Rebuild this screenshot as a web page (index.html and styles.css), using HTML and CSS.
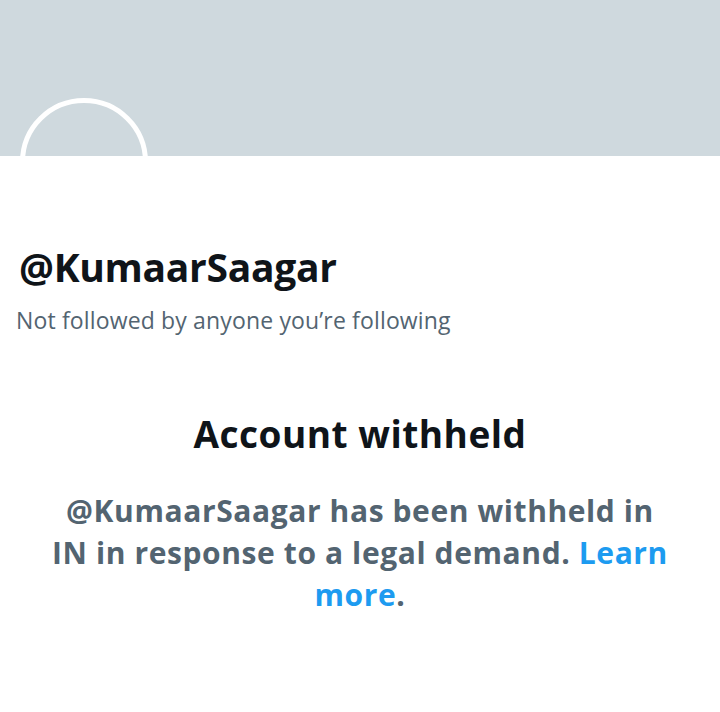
FILE: index.html
```html
<!DOCTYPE html>
<html lang="en">
<head>
    <meta charset="UTF-8">
    <meta name="viewport" content="width=device-width, initial-scale=1.0">
    <title>@KumaarSaagar</title>
    <link rel="stylesheet" href="styles.css">
</head>
<body>
    <div class="banner"></div>
    <div class="profile">
        <div class="avatar"></div>
        <h1 class="handle">@KumaarSaagar</h1>
        <p class="followers">Not followed by anyone you’re following</p>
    </div>

    <div class="withheld">
        <h2>Account withheld</h2>
        <p>@KumaarSaagar has been withheld in<br>IN in response to a legal demand. <a href="#">Learn more</a>.</p>
    </div>
</body>
</html>
```

FILE: styles.css
```css
body {
    margin: 0;
    background: #fff;
    font-family: "Open Sans", "Noto Sans", sans-serif;
    color: #0f1419;
}
.banner {
    height: 156px;
    background: #cfd9de;
}
.profile {
    padding: 0 16px;
}
.avatar {
    width: 118px;
    height: 118px;
    margin: -58px 0 0 4px;
    border: 5px solid #fff;
    border-radius: 50%;
}
.handle {
    margin: 21px 0 0 3px;
    font-size: 39px;
    font-weight: 700;
    letter-spacing: -0.3px;
    line-height: 40px;
}
.followers {
    margin: 18px 0 0;
    font-size: 23px;
    letter-spacing: 0.15px;
    color: #536471;
    line-height: 30px;
}
.withheld {
    margin: 75px auto 0;
    width: 640px;
    text-align: center;
}
.withheld h2 {
    margin: 0;
    font-size: 37px;
    font-weight: 700;
    letter-spacing: 0.5px;
    line-height: 48px;
}
.withheld p {
    margin: 32px 0 0;
    font-size: 30px;
    font-weight: 700;
    letter-spacing: 0.6px;
    line-height: 42px;
    color: #536471;
}
.withheld a {
    color: #1d9bf0;
    text-decoration: none;
}
```
